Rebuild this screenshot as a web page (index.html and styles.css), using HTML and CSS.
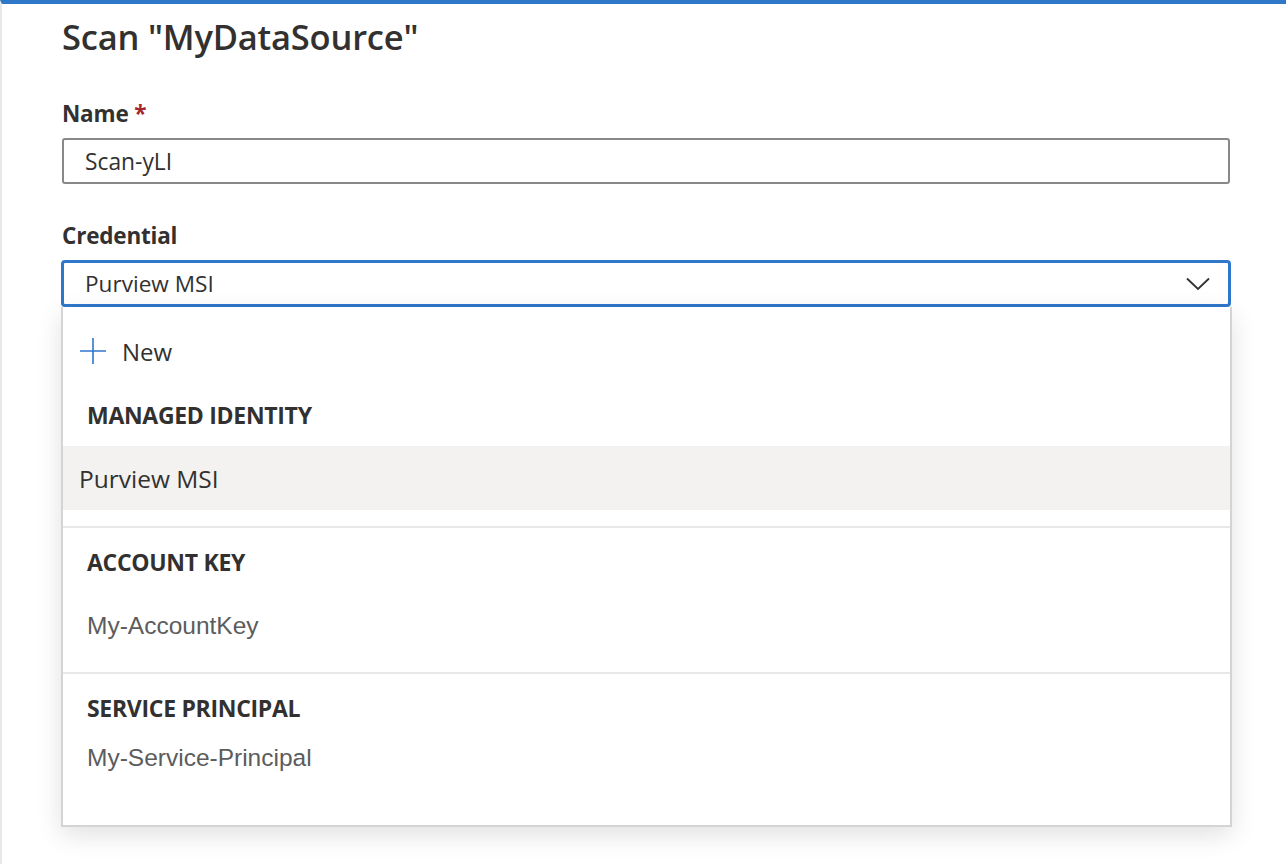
FILE: index.html
```html
<!DOCTYPE html>
<html lang="en">
<head>
<meta charset="utf-8">
<title>Scan MyDataSource</title>
<link rel="stylesheet" href="styles.css">
</head>
<body>
<div class="page">
  <div class="panel">
    <h1 class="title">Scan "MyDataSource"</h1>

    <div class="field">
      <label class="label">Name <span class="req">*</span></label>
      <div class="input">Scan-yLI</div>
    </div>

    <div class="field field-cred">
      <label class="label">Credential</label>
      <div class="select">
        <span class="select-value">Purview MSI</span>
        <svg class="chevron" width="24" height="14" viewBox="0 0 24 14"><path d="M1 1.5 L12 12 L23 1.5" fill="none" stroke="#323130" stroke-width="1.8"/></svg>
      </div>
      <div class="menu">
        <div class="menu-new">
          <svg class="plus" width="26" height="26" viewBox="0 0 26 26"><path d="M13 0 V26 M0 13 H26" stroke="#2f77cb" stroke-width="1.6" fill="none"/></svg>
          <span>New</span>
        </div>
        <div class="group group-1">
          <div class="group-head">MANAGED IDENTITY</div>
          <div class="item item-selected">Purview MSI</div>
        </div>
        <div class="group group-2">
          <div class="group-head">ACCOUNT KEY</div>
          <div class="item item-plain">My-AccountKey</div>
        </div>
        <div class="group group-3">
          <div class="group-head">SERVICE PRINCIPAL</div>
          <div class="item item-plain">My-Service-Principal</div>
        </div>
      </div>
    </div>
  </div>
</div>
</body>
</html>
```

FILE: styles.css
```css
html, body {
  margin: 0;
  padding: 0;
  background: #ffffff;
}
body {
  font-family: "Open Sans", "Noto Sans", sans-serif;
  color: #323130;
}
.page {
  border-top: 4px solid #2e77c9;
  border-left: 2px solid #e8e8e8;
  min-height: 864px;
  box-sizing: border-box;
}
.panel {
  padding: 0 56px 0 60px;
}
.title {
  margin: 0;
  padding-top: 11px;
  font-size: 34.5px;
  font-weight: 600;
  line-height: 44px;
  color: #323130;
  letter-spacing: -0.2px;
}
.field {
  margin-top: 40px;
}
.field-cred {
  margin-top: 37px;
}
.label {
  display: block;
  font-size: 22.5px;
  font-weight: 700;
  line-height: 30px;
  color: #323130;
  letter-spacing: -0.2px;
}
.req {
  color: #a4262c;
}
.input {
  margin-top: 9px;
  height: 46px;
  box-sizing: border-box;
  border: 2px solid #8a8886;
  border-radius: 3px;
  padding: 0 21px;
  display: flex;
  align-items: center;
  font-size: 22.8px;
  color: #323130;
}
.select {
  margin: 9px -1px 0 -1px;
  height: 47px;
  box-sizing: border-box;
  border: 3px solid #2f77cb;
  border-radius: 4px;
  padding: 0 18px 0 21px;
  display: flex;
  align-items: center;
  justify-content: space-between;
  font-size: 22.6px;
  color: #323130;
}
.chevron {
  display: block;
}
.menu {
  border: 2px solid #d4d4d4;
  border-top: none;
  margin: 0 -2px 0 -1px;
  padding-top: 24px;
  background: #fff;
  box-shadow: 0 8px 24px rgba(0, 0, 0, 0.12);
  height: 520px;
  box-sizing: border-box;
}
.menu-new {
  display: flex;
  align-items: center;
  gap: 16px;
  height: 40px;
  margin-bottom: 24px;
  padding-left: 17px;
  font-size: 24px;
  color: #323130;
}
.plus {
  display: block;
}
.group {
  border-bottom: 2px solid #e8e8e8;
}
.group-head {
  padding-left: 24px;
  height: 40px;
  display: flex;
  align-items: center;
  font-size: 23px;
  font-weight: 700;
  color: #323130;
  letter-spacing: -0.3px;
}
.item {
  display: flex;
  align-items: center;
  font-size: 24.5px;
}
.group-1 .item {
  margin: 11px 0 16px;
  height: 64px;
  padding-left: 16px;
}
.item-selected {
  background: #f3f2f1;
  color: #323130;
}
.item-plain {
  padding-left: 24px;
  font-family: "Liberation Sans", Arial, sans-serif;
  color: #5c5c5c;
  font-size: 24.5px;
}
.group-2 {
  padding-top: 14px;
}
.group-2 .item {
  margin: 12px 0 14px;
  height: 64px;
}
.group-3 {
  padding-top: 14px;
  border-bottom: none;
}
.group-3 .item {
  margin-top: 6px;
  height: 48px;
}
```
